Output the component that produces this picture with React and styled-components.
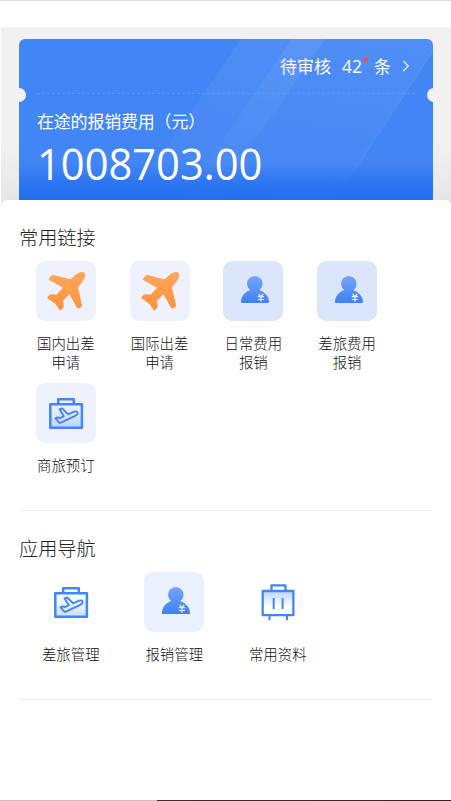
import React from 'react'
import styled, { createGlobalStyle } from 'styled-components'

const GlobalStyle = createGlobalStyle`
  * {
    box-sizing: border-box;
  }
  body {
    margin: 0;
    background: #fff;
    font-family: "Open Sans", "Noto Sans CJK SC", sans-serif;
  }
`

const Page = styled.div`
  display: flex;
  flex-direction: column;
  height: 801px;
  overflow: hidden;
  border-top: 1px solid #ddd;
`
const Hero = styled.header`
  margin: 26px 0 0 1px;
  padding: 12px 18px 0;
  height: 179px;
  background: linear-gradient(#f1f1f1 65%, #e6e6e6 97%);
`
const Card = styled.section`
  position: relative;
  width: 414px;
  height: 161px;
  padding: 0 18px;
  border-radius: 6px 6px 0 0;
  overflow: hidden;
  color: #fff;
  background: #4285f5;
`
const Shine = styled.svg`
  position: absolute;
  top: 0;
  left: 0;
`
const Notch = styled.i`
  position: absolute;
  top: 49px;
  ${({ $side }) => $side}: ${({ $side }) => ($side === 'left' ? -7 : -8)}px;
  width: 14px;
  height: 14px;
  border-radius: 50%;
  background: #f1f1f1;
`
const Pending = styled.div`
  position: relative;
  display: flex;
  align-items: center;
  justify-content: flex-end;
  height: 55px;
  padding-right: 5px;
  font-size: 17px;
  line-height: 55px;
`
const Count = styled.span`
  position: relative;
  margin: 0 12px 0 11px;
  font-size: 17.5px;
`
const Dot = styled.i`
  position: absolute;
  top: 18px;
  right: -6px;
  width: 5px;
  height: 5px;
  border-radius: 50%;
  background: #f4523b;
`
const Arrow = styled.svg`
  margin: 0 0 2px 11px;
`
const CostLabel = styled.div`
  position: relative;
  margin-top: 15px;
  font-size: 17px;
  line-height: 26px;
  letter-spacing: -0.2px;
`
const Cost = styled.div`
  position: relative;
  margin-top: 4px;
  font-size: 44px;
  line-height: 48px;
  transform: scaleX(0.947);
  transform-origin: left;
`
const Sheet = styled.main`
  position: relative;
  flex: 1;
  margin: -6px 0 0 1px;
  padding: 0 18px;
  border-radius: 6px 6px 0 0;
  background: #fff;
`
const Section = styled.section`
  width: 414px;
  height: ${({ $height }) => $height}px;
  padding-top: 24px;
  border-bottom: 1px solid #eee;
`
const Title = styled.h2`
  margin: 0 0 9px;
  font-size: 19.2px;
  font-weight: 300;
  line-height: 28px;
  color: #222;
`
const Grid = styled.div`
  display: grid;
  grid-template-columns: repeat(4, ${({ $column }) => $column}px);
  grid-auto-rows: 122px;
`
const Item = styled.div`
  display: flex;
  flex-direction: column;
  align-items: center;
`
const Tile = styled.div`
  width: 60px;
  height: 60px;
  border-radius: 9px;
  background: ${({ $bg }) => $bg};
  svg {
    display: block;
  }
`
const Caption = styled.div`
  width: 60px;
  margin-top: 13px;
  font-size: 14.4px;
  font-weight: 300;
  line-height: 19px;
  text-align: center;
  color: #111;
`
const BottomEdge = styled.footer`
  flex: none;
  height: 1px;
  background: linear-gradient(90deg, #c2c2c2 157px, #303236 157px, #30322a 300px, #20262a);
`

const PlaneIcon = () => (
  <svg width="60" height="60" viewBox="0 0 60 60">
    <defs>
      <linearGradient id="plane" x1="0" y1="0" x2="0" y2="1">
        <stop offset="0" stopColor="#ffa75c" />
        <stop offset="1" stopColor="#ff913b" />
      </linearGradient>
    </defs>
    <path
      fill="url(#plane)"
      d="M13 17.5 16 14.2Q16.6 13.7 17.4 13.9L34.5 18.3 40.5 13Q45 10 48 11.3Q50.2 13 48.4 17.2Q47.4 20 42 26.3L46 44.3Q46.2 45.2 45.5 45.8L42.8 47.4Q41.6 48 41 46.8L33.4 33.2 27 39.8 27.8 45.5Q27.8 46.2 27.3 46.7L25 49Q24.1 49.5 23.4 48.6L19.2 42.7 11.7 37.4Q10.9 36.8 11.6 36L13.7 33.7Q14.2 33.2 15 33.3L20.7 33.4 27 26.7 13.6 19.3Q12.4 18.5 13 17.5Z"
    />
  </svg>
)

const PersonIcon = () => (
  <svg width="60" height="60" viewBox="0 0 60 60">
    <defs>
      <linearGradient id="person" x1="0" y1="15" x2="0" y2="42" gradientUnits="userSpaceOnUse">
        <stop offset="0" stopColor="#77a5f5" />
        <stop offset="1" stopColor="#3d82f4" />
      </linearGradient>
    </defs>
    <path
      fill="url(#person)"
      d="M27.3 29.1A7.8 7.8 0 1 1 36.3 29.1C42.3 31.3 46 36 46 41.2Q46 42 45.2 42H18.8Q18 42 18 41.2C18 36 21.5 31 27.3 29.1Z"
    />
    <path d="M35.6 33 37.9 35.6 40.2 33M37.9 35.6V40.8M34.8 35.7H41M34.8 38.5H41" fill="none" stroke="#e6efff" strokeWidth="1.2" />
  </svg>
)

const TravelIcon = () => (
  <svg width="60" height="60" viewBox="0 0 60 60">
    <defs>
      <linearGradient id="travel" x1="0" y1="0" x2="0" y2="1">
        <stop offset="0.2" stopColor="#4285f5" stopOpacity="0.02" />
        <stop offset="1" stopColor="#4285f5" stopOpacity="0.28" />
      </linearGradient>
    </defs>
    <g fill="none" stroke="#4285f5" strokeWidth="2.5" strokeLinejoin="round">
      <path d="M22.2 21V16.3H37.8V21" />
      <rect x="14.3" y="21.3" width="31.6" height="23.5" fill="url(#travel)" />
      <path
        strokeWidth="1.9"
        d="M23.5 26.3 26.2 25.5 32.2 31.4 38.2 28.7C40.2 27.9 42.2 28.7 41.5 30.8Q41 31.9 39.2 32.8L25 39.7Q23.8 40.2 23.2 39.4L19.5 35.3 21.4 34.4 24.3 35 27.8 33.2Z"
      />
    </g>
  </svg>
)

const SuitcaseIcon = () => (
  <svg width="60" height="60" viewBox="0 0 60 60">
    <defs>
      <linearGradient id="suitcase" x1="0" y1="0" x2="0" y2="1">
        <stop offset="0" stopColor="#bdd4fb" />
        <stop offset="0.65" stopColor="#fff" />
      </linearGradient>
    </defs>
    <g fill="none" stroke="#4285f5" strokeWidth="2.3" strokeLinejoin="round">
      <path d="M23.5 19V13.3H37.5V19" />
      <rect x="14.7" y="19" width="30.7" height="24.2" fill="url(#suitcase)" />
      <path d="M25.7 26V37M34.6 26V37M21.5 43V48.3M38.9 43V48.3" strokeWidth="2" />
    </g>
  </svg>
)

const links = [
  { text: '国内出差申请', Icon: PlaneIcon, bg: '#edf2fe' },
  { text: '国际出差申请', Icon: PlaneIcon, bg: '#edf2fe' },
  { text: '日常费用报销', Icon: PersonIcon, bg: '#dce6fa' },
  { text: '差旅费用报销', Icon: PersonIcon, bg: '#dce6fa' },
  { text: '商旅预订', Icon: TravelIcon, bg: '#edf2fe' }
]

const apps = [
  { text: '差旅管理', Icon: TravelIcon, bg: 'transparent' },
  { text: '报销管理', Icon: PersonIcon, bg: '#eaf1fe' },
  { text: '常用资料', Icon: SuitcaseIcon, bg: 'transparent' }
]

const Menu = ({ items, column }) => (
  <Grid $column={column}>
    {items.map(({ text, Icon, bg }) => (
      <Item key={text}>
        <Tile $bg={bg}><Icon /></Tile>
        <Caption>{text}</Caption>
      </Item>
    ))}
  </Grid>
)

const CardShine = () => (
  <Shine width="414" height="161">
    <defs>
      <linearGradient id="glow" x1="0.7" y1="0" x2="0.4" y2="1">
        <stop offset="0" stopColor="#fff" stopOpacity="0.07" />
        <stop offset="1" stopColor="#fff" stopOpacity="0.01" />
      </linearGradient>
      <linearGradient id="base" x1="0" y1="0" x2="0" y2="1">
        <stop offset="0" stopColor="#2670f0" stopOpacity="0" />
        <stop offset="0.65" stopColor="#2670f0" stopOpacity="0.9" />
        <stop offset="1" stopColor="#2670f0" />
      </linearGradient>
    </defs>
    <path d="M222 0H414V12L316 161H112Z" fill="url(#glow)" />
    <path d="M273 0H306L195 161H162Z" fill="url(#glow)" />
    <path d="M414 12 336 130" stroke="#fff" strokeOpacity="0.05" strokeWidth="2" />
    <path d="M18 54.5H396" stroke="#6da1f8" strokeOpacity="0.6" strokeDasharray="3 2" />
    <rect y="124" width="414" height="37" fill="url(#base)" />
  </Shine>
)

const App = () => (
  <>
    <GlobalStyle />
    <Page>
      <Hero>
        <Card>
          <CardShine />
          <Notch $side="left" />
          <Notch $side="right" />
          <Pending>
            <span>待审核</span>
            <Count>42<Dot /></Count>
            <span>条</span>
            <Arrow width="8" height="12" viewBox="0 0 8 12">
              <path d="M1.3 1 6.3 6 1.3 11" fill="none" stroke="#e3edff" strokeWidth="1.3" />
            </Arrow>
          </Pending>
          <CostLabel>在途的报销费用（元）</CostLabel>
          <Cost>1008703.00</Cost>
        </Card>
      </Hero>
      <Sheet>
        <Section $height={311}>
          <Title>常用链接</Title>
          <Menu items={links} column={93.75} />
        </Section>
        <Section $height={189}>
          <Title>应用导航</Title>
          <Menu items={apps} column={103.5} />
        </Section>
      </Sheet>
      <BottomEdge />
    </Page>
  </>
)

export default App
